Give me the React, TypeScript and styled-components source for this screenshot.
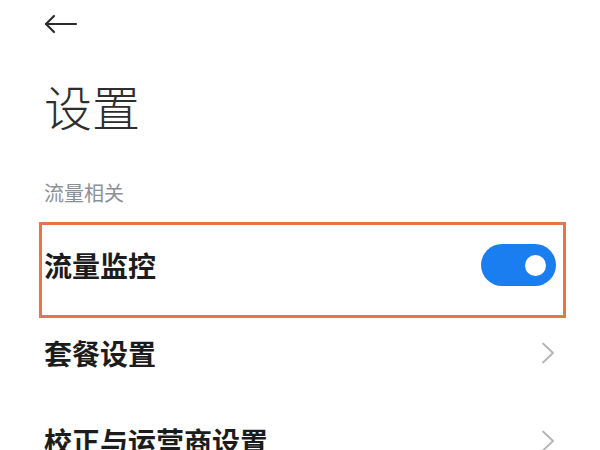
import React from "react";
import styled, { createGlobalStyle } from "styled-components";

const Global = createGlobalStyle`
  html, body { margin: 0; padding: 0; background: #ffffff; overflow: hidden; }
  body { font-family: "Noto Sans CJK SC", "Noto Sans", sans-serif; }
  * { box-sizing: border-box; }
`;

const Page = styled.div`
  width: 600px;
  height: 450px;
  overflow: hidden;
  background: #ffffff;
  padding: 0 44px;
  display: flex;
  flex-direction: column;
  & > * { flex-shrink: 0; }
`;

const BackBar = styled.div`
  height: 48px;
  display: flex;
  align-items: center;
`;

const BackButton = styled.button`
  border: none;
  background: none;
  padding: 0;
  margin: 0;
  width: 34px;
  height: 20px;
  display: flex;
  align-items: center;
  color: #2b2b2b;
`;

const Title = styled.h1`
  margin: 25px 0 0;
  font-family: "Noto Sans CJK SC", sans-serif;
  font-size: 48px;
  line-height: 64px;
  font-weight: 300;
  color: #2e2e2e;
  letter-spacing: 0;
`;

const SectionLabel = styled.div`
  margin-top: 42px;
  font-size: 20px;
  line-height: 28px;
  color: #8b8f98;
  font-weight: 400;
`;

const List = styled.div`
  margin-top: 14px;
  display: flex;
  flex-direction: column;
  & > * { flex-shrink: 0; }
`;

const Row = styled.div`
  position: relative;
  height: 88px;
  display: flex;
  align-items: center;
  justify-content: space-between;
`;

const RowLabel = styled.span`
  font-size: 28px;
  line-height: 40px;
  font-weight: 700;
  color: #1c1c1c;
`;

const Highlight = styled.div`
  position: absolute;
  left: -5px;
  top: 1px;
  width: 527px;
  height: 96px;
  border: 3px solid #e8744b;
  pointer-events: none;
`;

const Toggle = styled.div<{ $on: boolean }>`
  width: 75px;
  height: 42px;
  border-radius: 21px;
  background: ${(p) => (p.$on ? "#1a7ef0" : "#d6d6d6")};
  display: flex;
  align-items: center;
  justify-content: ${(p) => (p.$on ? "flex-end" : "flex-start")};
  padding: 0 10px;
`;

const Knob = styled.div`
  width: 21px;
  height: 21px;
  border-radius: 50%;
  background: #ffffff;
`;

const Chevron = styled.span`
  display: flex;
  align-items: center;
  color: #b4b4b4;
  margin-right: 1px;
`;

const ArrowLeft = () => (
  <svg width="34" height="20" viewBox="0 0 34 20" fill="none">
    <path d="M2 10 H32" stroke="currentColor" strokeWidth="2.2" strokeLinecap="round" />
    <path d="M10 2 L2 10 L10 18" stroke="currentColor" strokeWidth="2.2" strokeLinecap="round" strokeLinejoin="round" />
  </svg>
);

const ChevronRight = () => (
  <svg width="14" height="22" viewBox="0 0 14 22" fill="none">
    <path d="M2 1.5 L12 11 L2 20.5" stroke="currentColor" strokeWidth="1.8" strokeLinecap="round" strokeLinejoin="round" />
  </svg>
);

export default function App() {
  return (
    <>
      <Global />
      <Page>
        <BackBar>
          <BackButton aria-label="返回">
            <ArrowLeft />
          </BackButton>
        </BackBar>
        <Title>设置</Title>
        <SectionLabel>流量相关</SectionLabel>
        <List>
          <Row>
            <RowLabel>流量监控</RowLabel>
            <Toggle $on={true}>
              <Knob />
            </Toggle>
            <Highlight />
          </Row>
          <Row>
            <RowLabel>套餐设置</RowLabel>
            <Chevron>
              <ChevronRight />
            </Chevron>
          </Row>
          <Row>
            <RowLabel>校正与运营商设置</RowLabel>
            <Chevron>
              <ChevronRight />
            </Chevron>
          </Row>
        </List>
      </Page>
    </>
  );
}
